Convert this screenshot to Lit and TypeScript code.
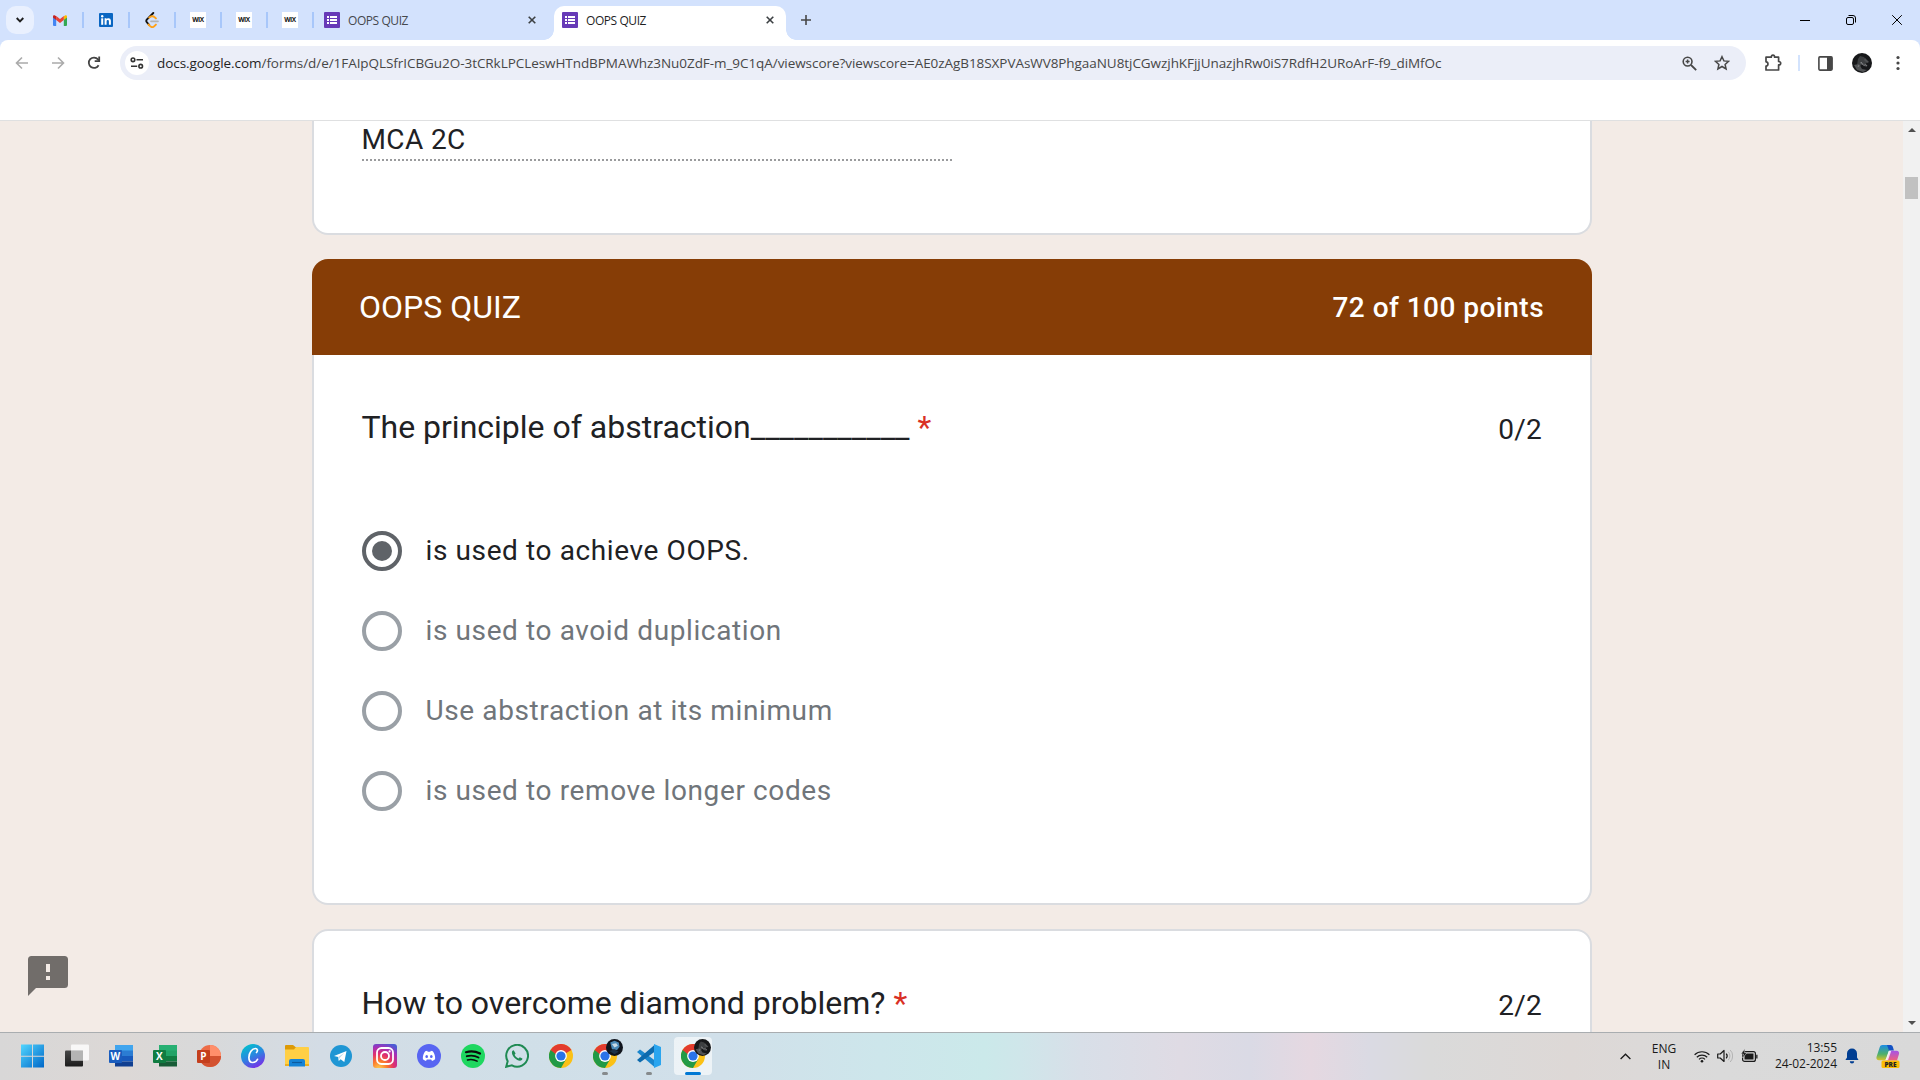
import { LitElement, html, css, svg, nothing } from "lit";
import { customElement } from "lit/decorators.js";
import { classMap } from "lit/directives/class-map.js";

const icon = (w: number, h: number, box: string, body: unknown) =>
  html`<svg class="ico" width=${w} height=${h} viewBox=${box} fill="none">${body}</svg>`;

const gmail = icon(14, 11, "0 0 14 11", svg`
  <path d="M0 1.600V10a1 1 0 0 0 1 1h2.200V4z" fill="#4285f4"/>
  <path d="M14 1.600V10a1 1 0 0 1-1 1h-2.200V4z" fill="#34a853"/>
  <path d="M10.800 1.200L12 .4c.9-.6 2 0 2 1.100V2.600L10.800 5z" fill="#fbbc04"/>
  <path d="M3.200 5V1l3.800 2.900L10.800 1v4L7 7.900z" fill="#ea4335"/>
  <path d="M0 2.600V1.500C0 .4 1.100-.2 2 .4L3.200 1.200V5z" fill="#c5221f"/>`);

const linkedin = icon(14, 14, "0 0 14 14", svg`
  <rect width="14" height="14" rx="1" fill="#0a66c2"/>
  <rect x="2.200" y="5.300" width="2" height="6.500" fill="#fff"/><circle cx="3.200" cy="3.200" r="1.200" fill="#fff"/>
  <path d="M5.600 5.300h1.900v.9c.9-1.600 4.400-1.500 4.400 1.600v4H9.900V8.500c0-2-2.300-1.800-2.300 0v3.300h-2z" fill="#fff"/>`);

const leetcode = icon(14, 16, "0 0 14 16", svg`
  <path d="M8.300 1L2 7.400c-1 1-1 2 0 3L4.200 13" stroke="#111" stroke-width="1.900" stroke-linecap="round"/>
  <path d="M4.200 5.600c1.500-1.500 4-1.900 5.500-.3l1.200 1.100M3.500 12.500l1.600 1.600c1.300 1.200 3.200 1.100 4.300 0l1.500-1.500" stroke="#ffa116" stroke-width="1.900" stroke-linecap="round"/>
  <path d="M6 9.300h7" stroke="#b3b3b3" stroke-width="1.700" stroke-linecap="round"/>`);

const forms = icon(16, 16, "0 0 16 16", svg`
  <rect width="16" height="16" rx="1" fill="#673ab7"/>
  <path d="M3 4h2v2H3zM3 7h2v2H3zM3 10h2v2H3zM6 4h7v2H6zM6 7h7v2H6zM6 10h7v2H6z" fill="#fff"/>`);

const close = icon(8, 8, "0 0 8 8", svg`<path d="M.7.7l6.600 6.600M7.300.7L.7 7.300" stroke="#3c4043" stroke-width="1.600"/>`);
const plus = icon(10, 10, "0 0 10 10", svg`<path d="M5 0v10M0 5h10" stroke="#474747" stroke-width="1.600"/>`);
const chevron = icon(8, 6, "0 0 8 6", svg`<path d="M.7 1L4 4.300 7.300 1" stroke="#1f1f1f" stroke-width="1.900"/>`);

const back = icon(14, 14, "0 0 14 14", svg`<path d="M13 7H2M7 1.500L1.500 7 7 12.500" stroke="#ababab" stroke-width="1.600"/>`);
const forward = icon(14, 14, "0 0 14 14", svg`<path d="M1 7h11M7 1.500L12.500 7 7 12.500" stroke="#ababab" stroke-width="1.600"/>`);
const reload = icon(14, 14, "0 0 14 14", svg`<path d="M11.600 9.200A5.200 5.200 0 1 1 11 3.400l1 1.100" stroke="#444" stroke-width="1.800"/><path d="M12.200.6v4.500H7.700" stroke="#444" stroke-width="1.800"/>`);
const tune = icon(14, 12, "0 0 14 12", svg`
  <g stroke="#333" stroke-width="1.600"><circle cx="3" cy="2.800" r="1.800"/><path d="M6.500 2.800H13M1 9.200h6.200"/><circle cx="10.700" cy="9.200" r="1.800"/></g>`);
const zoomIn = icon(15, 15, "0 0 15 15", svg`
  <circle cx="5.600" cy="5.600" r="4.400" stroke="#474747" stroke-width="1.600"/><path d="M9 9l5.200 5.200" stroke="#474747" stroke-width="1.800"/><path d="M5.600 3.600v4M3.600 5.600h4" stroke="#474747" stroke-width="1.500"/>`);
const star = icon(16, 16, "0 0 16 16", svg`<path d="M8 1.700l1.900 4.200 4.700.4-3.500 3.100 1 4.600L8 11.500 3.900 14l1-4.600L1.400 6.300l4.700-.4z" stroke="#474747" stroke-width="1.500"/>`);
const puzzle = icon(18, 18, "0 0 18 18", svg`
  <path d="M2 3.200h5.300C7.300.4 10.600.4 10.600 3.200H14.600v4.300c2.800 0 2.800 3.400 0 3.400V16H2v-4c2.600-.2 2.600-4 0-4.200z" stroke="#474747" stroke-width="1.700" stroke-linejoin="round"/>`);
const panel = icon(15, 15, "0 0 15 15", svg`<rect x=".9" y=".9" width="13.200" height="13.200" rx="1" stroke="#474747" stroke-width="1.600"/><path d="M9 1h5v13H9z" fill="#474747"/>`);
const dots = icon(4, 16, "0 0 4 16", svg`<g fill="#474747"><circle cx="2" cy="2.500" r="1.600"/><circle cx="2" cy="8" r="1.600"/><circle cx="2" cy="13.500" r="1.600"/></g>`);
const portrait = (size: number) => icon(size, size, "0 0 20 20", svg`
  <circle cx="10" cy="10" r="10" fill="#17181a"/>
  <path d="M6 6l2-3 4 1 3 4-1 3-4-1-2 4-3-2z" fill="#3d3f41"/>
  <path d="M2 12l5-1 3 5 5 1-4 2-6-2zM13 5l4 4-2 1-3-3z" fill="#505254"/>
  <path d="M9 9l2 2 3 .5 1 1.500-3-.5-3-2zM6 14l1-2" stroke="#8f9193" stroke-width=".7"/>`);
const winMin = icon(10, 1, "0 0 10 1", svg`<path d="M0 0h10v1H0z" fill="#000"/>`);
const winMax = icon(10, 10, "0 0 10 10", svg`<rect x=".5" y="2.500" width="7" height="7" rx="1.500" stroke="#000"/><path d="M2.500.5H7A2.500 2.500 0 0 1 9.500 3v4.500" stroke="#000"/>`);
const winClose = icon(10, 10, "0 0 10 10", svg`<path d="M.2.2l9.600 9.600M9.800.2L.2 9.800" stroke="#000"/>`);

const office = (letter: string, dark: string, c: string[], round = false) => icon(24, 24, "0 0 24 24", svg`
  ${round
    ? svg`<circle cx="13" cy="12" r="11" fill=${c[0]}/><path d="M13 1a11 11 0 0 1 11 11H13z" fill=${c[1]}/><path d="M2 12h22a11 11 0 0 1-22 0z" fill=${c[2]}/>`
    : svg`<path d="M6 1h18v6H6z" fill=${c[0]}/><path d="M6 6.500h18V12H6z" fill=${c[1]}/><path d="M6 12h18v5.500H6z" fill=${c[2]}/><path d="M6 17.500h18V22.500H6z" fill=${c[3]}/>`}
  <rect x="0" y="6" width="13" height="13" rx="1" fill=${dark}/>
  <text x="6.300" y="16" text-anchor="middle" font-family="Open Sans, sans-serif" font-weight="700" font-size="10" fill="#fff">${letter}</text>`);

const chrome = () => icon(24, 24, "0 0 24 24", svg`
  <circle cx="12" cy="12" r="12" fill="#fbc116"/>
  <path d="M12 12L1.600 6A12 12 0 0 1 22.400 6z" fill="#e33b2e"/>
  <path d="M1.600 6A12 12 0 0 0 12 24l5.200-9L12 12z" fill="#229a46"/>
  <path d="M1.600 6L12 6v6l-3 1z" fill="#e33b2e"/><path d="M1.600 6l5.200 9 3-2z" fill="#229a46"/>
  <circle cx="12" cy="12" r="5.900" fill="#fff"/><circle cx="12" cy="12" r="4.600" fill="#2a73e8"/>`);

const windows = icon(24, 24, "0 0 24 24", svg`
  <defs><linearGradient id="w" x1="0" y1="0" x2="1" y2="1"><stop stop-color="#52d6ff"/><stop offset="1" stop-color="#0067c8"/></linearGradient></defs>
  <path d="M0 .5h11v11.300H0zM12 .5H23v11.300H12zM0 12.700h11v10.800H0zM12 12.700H23v10.800H12z" fill="url(#w)"/>`);
const taskView = icon(24, 24, "0 0 24 24", svg`
  <defs><linearGradient id="tv" x1="0" y1="0" x2="0" y2="1"><stop stop-color="#484848"/><stop offset="1" stop-color="#1c1c1c"/></linearGradient></defs>
  <rect x="0" y="6.500" width="18" height="16" rx="1" fill="url(#tv)"/><rect x="6" y=".5" width="18" height="16" rx="1" fill="#fff" fill-opacity=".8"/><path d="M6 6.500h12v10H6z" fill="#b4b4b4"/>`);
const canva = icon(24, 24, "0 0 24 24", svg`
  <defs><linearGradient id="cv" x1=".2" y1="0" x2=".7" y2="1"><stop stop-color="#00c4cc"/><stop offset=".5" stop-color="#2a86e0"/><stop offset="1" stop-color="#7d2ae8"/></linearGradient></defs>
  <circle cx="12" cy="12" r="12" fill="url(#cv)"/>
  <path d="M15.500 8.500c1.600-1.500 1-4-1-4-3.500 0-6.600 4.600-6.600 9 0 3 1.500 5 3.800 5 2 0 3.800-1.300 4.800-3.200" stroke="#fff" stroke-width="1.700" stroke-linecap="round"/>`);
const folder = icon(24, 24, "0 0 24 24", svg`
  <path d="M0 2a1 1 0 0 1 1-1h7l2.500 2H23v6H0z" fill="#dd9a06"/><path d="M0 5.500h9L11 3h12a1 1 0 0 1 1 1v18H0z" fill="#ffcf45"/>
  <path d="M4 22.500V17a2 2 0 0 1 2-2h12a2 2 0 0 1 2 2v5.500z" fill="#1583d6"/><path d="M7 18.500h10" stroke="#0c5a9e" stroke-width="1.200"/><path d="M0 20h4v2H0zM20 20h4v2h-4z" fill="#eeb01e"/>`);
const telegram = icon(22, 22, "0 0 22 22", svg`
  <circle cx="11" cy="11" r="11" fill="#1f96d4"/><path d="M4 11l12.500-5-2.200 11-3.700-2.700L8.800 16l-.6-4z" fill="#fff"/><path d="M8.200 12l6-4-4.600 5-.8 3z" fill="#b9d9ec"/>`);
const instagram = icon(24, 24, "0 0 24 24", svg`
  <defs><radialGradient id="ig" cx=".25" cy="1.050" r="1.150"><stop stop-color="#ffd354"/><stop offset=".3" stop-color="#fb7a2c"/><stop offset=".55" stop-color="#e1306c"/><stop offset=".8" stop-color="#a52fb8"/><stop offset="1" stop-color="#4c5bd4"/></radialGradient></defs>
  <rect width="24" height="24" rx="3" fill="url(#ig)"/><rect x="4" y="4" width="16" height="16" rx="4.500" stroke="#fff" stroke-width="1.800"/><circle cx="12" cy="12" r="4" stroke="#fff" stroke-width="1.800"/><circle cx="16.600" cy="7.400" r="1.100" fill="#fff"/>`);
const discord = icon(24, 24, "0 0 24 24", svg`
  <circle cx="12" cy="12" r="12" fill="#5865f2"/><path d="M8.200 7.300l2-.5.5.9h2.600l.5-.9 2 .5c1.700 2.300 2.600 5 2.300 8-.9.800-2 1.300-3.100 1.600l-.8-1.300H9.800L9 16.900c-1.100-.3-2.200-.8-3.100-1.600-.3-3 .6-5.700 2.300-8z" fill="#fff"/><ellipse cx="9.700" cy="12.500" rx="1.300" ry="1.500" fill="#5865f2"/><ellipse cx="14.300" cy="12.500" rx="1.300" ry="1.500" fill="#5865f2"/>`);
const spotify = icon(24, 24, "0 0 24 24", svg`
  <circle cx="12" cy="12" r="12" fill="#1ed760"/><g stroke="#0b0b0b" stroke-linecap="round"><path d="M5 8.200c4.700-1.400 9.700-.9 14 1.300" stroke-width="2.200"/><path d="M5.800 12.200c4-1.100 8-.7 11.700 1.300" stroke-width="1.900"/><path d="M6.500 15.900c3.400-.9 6.500-.5 9.600 1.200" stroke-width="1.600"/></g>`);
const whatsapp = icon(24, 24, "0 0 24 24", svg`
  <path d="M1.200 22.800l1.500-5.600A10.900 10.900 0 1 1 6.900 21.300z" stroke="#1f8a53" stroke-width="2"/><path d="M8.700 6.300c-.6-.1-1.800.8-1.800 2.200 0 3.600 4.700 8.200 8 8.200 1.600 0 2.700-1.200 2.500-2.200l-2.600-1.300-1.300 1.400c-1.800-.8-3.100-2-3.900-3.800l1-1.300z" fill="#1f8a53"/>`);
const vscode = icon(24, 24, "0 0 24 24", svg`
  <path d="M0 8l3-2.500L18 16.500v7z" fill="#1a86cd"/><path d="M0 16l3 2.500L18 7.500V.5z" fill="#0d6aad"/><path d="M17 0l7 3v18l-7 3z" fill="#2aa5ef"/>`);

const wifi = icon(16, 13, "0 0 16 13", svg`
  <g stroke="#1a1a1a" stroke-width="1.200"><path d="M.6 4.800a10.500 10.500 0 0 1 14.800 0M2.800 7.200a7.400 7.400 0 0 1 10.400 0M5 9.400a4.300 4.300 0 0 1 6 0"/></g><circle cx="8" cy="11.300" r="1.300" fill="#1a1a1a"/>`);
const volume = icon(16, 14, "0 0 16 14", svg`
  <path d="M.7 5h2.500L7 1.500v11L3.200 9H.7z" stroke="#1a1a1a" stroke-width="1.200" stroke-linejoin="round"/><path d="M9.200 4.700a3.500 3.500 0 0 1 0 4.600" stroke="#1a1a1a" stroke-width="1.200"/><path d="M11.200 2.800a6 6 0 0 1 0 8.400M13.200 1a8.500 8.500 0 0 1 0 12" stroke="#b3b3b3" stroke-width="1"/>`);
const battery = icon(17, 14, "0 0 17 14", svg`
  <rect x="1.600" y="2.600" width="12.800" height="9.800" rx="2" stroke="#1a1a1a" stroke-width="1.200"/><path d="M3.500 4.500h9v6h-9z" fill="#1a1a1a"/><path d="M15.200 5.800h1.300v3.600h-1.300z" fill="#1a1a1a"/><path d="M3.800-.2L0 5h2.400L1.600 9 6 3.800H3.600z" fill="#1a1a1a" stroke="#dadada" stroke-width=".5"/>`);
const bell = icon(14, 16, "0 0 14 16", svg`<path d="M7 .5a5 5 0 0 1 5 5v4l1.600 2.500H.4L2 9.500v-4a5 5 0 0 1 5-5zM4.800 13.300h4.400a2.200 2.200 0 0 1-4.400 0z" fill="#003e92"/>`);
const copilot = icon(24, 24, "0 0 24 24", svg`
  <defs><linearGradient id="p1" x1="0" y1="0" x2="0" y2="1"><stop stop-color="#1b8ce4"/><stop offset=".6" stop-color="#4fb06a"/><stop offset="1" stop-color="#d9c32b"/></linearGradient>
  <linearGradient id="p2" x1="0" y1="0" x2="0" y2="1"><stop stop-color="#a553e8"/><stop offset="1" stop-color="#f0607a"/></linearGradient></defs>
  <path d="M6.500 1H15l-4.500 13c-.5 1.500-1.500 2.300-3 2.300H3c-2 0-3-1.500-2.500-3.300L3.700 3.200C4.200 1.700 5 1 6.500 1z" fill="url(#p1)"/><path d="M11 1h3.500c1.300 0 2 .8 2.400 2l1 3.500H13z" fill="#1452c4"/>
  <path d="M14.500 6.800h6c2 0 3 1.300 2.500 3.200L21 16.500H10.500l2.500-7.700c.3-1.200.7-2 1.500-2z" fill="url(#p2)"/><path d="M12.700 7h2.500L12 16.300H9.500z" fill="#fff" opacity=".8"/>
  <rect x="5.500" y="16.500" width="18" height="7.500" rx="1.500" fill="#fbbc05"/><text x="14.500" y="22.700" text-anchor="middle" font-family="Open Sans, sans-serif" font-weight="800" font-size="6.500" fill="#222">PRE</text>`);

const feedback = icon(40, 40, "0 0 40 40", svg`<path d="M3.500 0h33A3.500 3.500 0 0 1 40 3.500v25a3.500 3.500 0 0 1-3.500 3.500H8l-8 8V3.500A3.500 3.500 0 0 1 3.500 0z" fill="#716d6a"/><path d="M18 8h4v8h-4zM18 20h4v4h-4z" fill="#f3ebe6"/>`);

const wix = html`<span class="wix">WIX</span>`;
const PINNED = [gmail, linkedin, leetcode, wix, wix, wix];

const OPTIONS = [
  { text: "is used to achieve OOPS.", checked: true },
  { text: "is used to avoid duplication", checked: false },
  { text: "Use abstraction at its minimum", checked: false },
  { text: "is used to remove longer codes", checked: false },
];

@customElement("browser-chrome")
class BrowserChrome extends LitElement {
  static styles = css`
    :host { display: block; font-family: "Open Sans", "Noto Sans", sans-serif; }
    .ico { display: block; flex: none; }
    .strip { display: flex; height: 40px; background: #d3e2fd; align-items: flex-start; }
    .search { width: 28px; height: 28px; margin: 6px 3px 0 6px; border-radius: 10px; background: #e9f0fe; display: grid; place-items: center; }
    .pin { width: 46px; height: 40px; display: grid; place-items: center; box-sizing: border-box; padding-right: 2px; background: linear-gradient(#a8c7fa, #a8c7fa) right center / 2px 16px no-repeat; }
    .pins { display: flex; margin-left: 1px; }
    .wix { width: 16px; height: 16px; background: #fff; color: #111; font: 700 6.5px/16px "Open Sans", sans-serif; text-align: center; letter-spacing: -0.4px; }
    .tab { display: flex; align-items: center; height: 34px; padding-bottom: 6px; box-sizing: border-box; margin-top: 6px; font-size: 12px; color: #45484d; letter-spacing: -0.43px; }
    .tab .name { margin-left: 8px; flex: 1; line-height: 16px; padding-top: 2px; }
    .t1 { width: 240px; padding-left: 10px; padding-right: 18px; }
    .t2 { width: 232px; background: #fff; border-radius: 10px 10px 0 0; padding-left: 8px; padding-right: 12px; position: relative; color: #1f1f1f; }
    .t2::before, .t2::after { content: ""; position: absolute; bottom: 0; width: 10px; height: 10px; }
    .t2::before { left: -10px; background: radial-gradient(circle at 0 0, transparent 9.5px, #fff 10px); }
    .t2::after { right: -10px; background: radial-gradient(circle at 100% 0, transparent 9.5px, #fff 10px); }
    .plus { padding: 15px 0 0 15px; }
    .win { margin-left: auto; display: flex; height: 40px; }
    .win span { width: 46px; display: grid; place-items: center; }
    .bar { display: flex; height: 80px; background: #fff; border-radius: 8px 8px 0 0; align-items: flex-start; padding-top: 6px; box-sizing: border-box; }
    .back { background: #d3e2fd; border-bottom: 1px solid #dfe0e1; }
    .nav { display: flex; height: 34px; align-items: center; padding-left: 4px; width: 116px; }
    .nav span { width: 36px; display: grid; place-items: center; }
    .omni { display: flex; align-items: center; width: 1626px; height: 34px; border-radius: 17px; background: #ebeef8; box-sizing: border-box; padding: 0 16px 0 5px; }
    .info { width: 24px; height: 24px; border-radius: 50%; background: #fff; display: grid; place-items: center; margin-right: 8px; }
    .url { flex: 1; font-size: 13.5px; line-height: 20px; color: #474747; white-space: nowrap; letter-spacing: -0.058px; }
    .url b { font-weight: 400; color: #1f1f1f; }
    .omni .star { margin-left: 17px; }
    .right { display: flex; align-items: center; height: 34px; flex: 1; }
    .puz { margin-left: 18px; }
    .sep { width: 2px; height: 16px; background: #d3e3fd; margin: 0 18px 0 16px; }
    .ava { margin: 0 24px 0 19px; }
  `;
  render() {
    return html`
      <div class="strip">
        <div class="search">${chevron}</div>
        <div class="pins">${PINNED.map((p) => html`<div class="pin">${p}</div>`)}</div>
        <div class="tab t1">${forms}<span class="name">OOPS QUIZ</span>${close}</div>
        <div class="tab t2">${forms}<span class="name">OOPS QUIZ</span>${close}</div>
        <div class="plus">${plus}</div>
        <div class="win"><span>${winMin}</span><span>${winMax}</span><span>${winClose}</span></div>
      </div>
      <div class="back"><div class="bar">
        <div class="nav"><span>${back}</span><span>${forward}</span><span>${reload}</span></div>
        <div class="omni">
          <span class="info">${tune}</span>
          <span class="url"><b>docs.google.com</b>/forms/d/e/1FAIpQLSfrICBGu2O-3tCRkLPCLeswHTndBPMAWhz3Nu0ZdF-m_9C1qA/viewscore?viewscore=AE0zAgB18SXPVAsWV8PhgaaNU8tjCGwzjhKFjjUnazjhRw0iS7RdfH2URoArF-f9_diMfOc</span>
          ${zoomIn}<span class="star">${star}</span>
        </div>
        <div class="right"><span class="puz">${puzzle}</span><span class="sep"></span>${panel}<span class="ava">${portrait(20)}</span>${dots}</div>
      </div></div>`;
  }
}

@customElement("quiz-page")
class QuizPage extends LitElement {
  static styles = css`
    :host { display: flex; height: 911px; overflow: hidden; background: #f3ebe6; font-family: Roboto, sans-serif; color: #202124; position: relative; }
    .ico { display: block; }
    .col { width: 1280px; margin-left: 312px; display: flex; flex-direction: column; gap: 24px; flex: none; }
    .card { background: #fff; border: 2px solid #dadce0; border-radius: 16px; box-sizing: border-box; flex: none; }
    .first { height: 114px; border-top: 0; border-radius: 0 0 16px 16px; padding: 0 48px; }
    .answer { width: 590px; height: 40px; box-sizing: border-box; border-bottom: 2px dotted #9a9b9d; font-size: 28px; line-height: 38px; letter-spacing: 0.4px; text-indent: -0.5px; }
    .quiz { height: 646px; border: 0; background: none; display: flex; flex-direction: column; }
    .head { height: 96px; background: #863d06; color: #fff; border-radius: 16px 16px 0 0; display: flex; align-items: center; justify-content: space-between; padding: 0 48px 0 47px; box-sizing: border-box; }
    .title { font-size: 32px; line-height: 40px; }
    .score { font-size: 28px; line-height: 40px; font-weight: 500; letter-spacing: 0.45px; padding-top: 2px; }
    .body { flex: 1; background: #fff; border: 2px solid #dadce0; border-top: 0; border-radius: 0 0 16px 16px; padding: 48px 48px 0; }
    .q { display: flex; justify-content: space-between; height: 51px; font-size: 32px; line-height: 48px; text-indent: -0.6px; }
    .q i { font-style: normal; color: #d93025; margin-left: 8px; }
    .pts { font-size: 28px; letter-spacing: 0.2px; padding-top: 3px; line-height: 48px; }
    .opts { display: flex; flex-direction: column; gap: 40px; margin-top: 77px; }
    .opt { display: flex; align-items: center; height: 40px; font-size: 28px; letter-spacing: 0.61px; color: #70757a; line-height: 38px; }
    .opt.on { color: #202124; }
    .ring { width: 40px; height: 40px; border: 4px solid #9aa0a6; border-radius: 50%; box-sizing: border-box; margin-right: 23.5px; display: grid; place-items: center; }
    .label { padding-bottom: 1px; }
    .on .ring { border-color: #5f6368; }
    .dot { width: 20px; height: 20px; border-radius: 50%; background: #5f6368; }
    .next { height: 300px; padding: 48px 48px 0; }
    .fb { position: absolute; left: 28px; top: 835px; }
    .scroll { margin-left: auto; width: 17px; background: #f1f1f1; display: flex; flex-direction: column; align-items: center; box-sizing: border-box; padding: 7px 0; }
    .up, .down { width: 0; height: 0; border: 4px solid transparent; border-top: 0; border-bottom: 4px solid #505050; }
    .down { border-top: 4px solid #505050; border-bottom: 0; margin-top: auto; }
    .thumb { width: 13px; height: 22px; margin-top: 45px; background: #c1c1c1; }
  `;
  render() {
    return html`
      <div class="col">
        <div class="card first"><div class="answer">MCA 2C</div></div>
        <div class="card quiz">
          <div class="head"><span class="title">OOPS QUIZ</span><span class="score">72 of 100 points</span></div>
          <div class="body">
            <div class="q"><span>The principle of abstraction___________<i>*</i></span><span class="pts">0/2</span></div>
            <div class="opts">${OPTIONS.map((o) => html`
              <div class=${classMap({ opt: true, on: o.checked })}><span class="ring">${o.checked ? html`<b class="dot"></b>` : nothing}</span><span class="label">${o.text}</span></div>`)}
            </div>
          </div>
        </div>
        <div class="card next"><div class="q"><span>How to overcome diamond problem?<i>*</i></span><span class="pts">2/2</span></div></div>
      </div>
      <div class="fb">${feedback}</div>
      <div class="scroll"><span class="up"></span><span class="thumb"></span><span class="down"></span></div>`;
  }
}

@customElement("task-bar")
class TaskBar extends LitElement {
  static styles = css`
    :host { display: flex; height: 48px; box-sizing: border-box; border-top: 1px solid #a9adb0; font-family: "Open Sans", sans-serif; color: #1a1a1a;
      background: linear-gradient(90deg, #d8d7d7 0, #dcd8d6 125px, #d8d9da 210px, #d3dce5 320px, #d0dfe8 520px, #d1e0ea 720px, #cde6eb 880px, #cbe9ea 985px, #cfe6ea 1020px, #d8dfe8 1080px, #dfdbe4 1180px, #dadae5 1250px, #e5d8e1 1310px, #dadae3 1370px, #dadada 1430px, #ddd8d6 1570px, #dcd9d8 1640px, #dadada 1720px, #d9d9d9 100%); }
    .ico { display: block; }
    .apps { display: flex; padding-left: 11px; }
    .app { width: 44px; height: 46px; display: grid; place-items: center; position: relative; }
    .tile { width: 38px; height: 38px; display: grid; place-items: center; border-radius: 4px; }
    .active .tile { background: rgba(255, 255, 255, 0.6); }
    .badge { position: absolute; left: 23px; top: 6px; }
    .run { position: absolute; bottom: 4px; left: 19px; width: 6px; height: 3px; border-radius: 2px; background: #868a8c; }
    .active .run { left: 14px; width: 16px; background: #0078d4; }
    .tray { margin-left: auto; display: flex; align-items: center; height: 46px; font-size: 12px; line-height: 16px; letter-spacing: -0.05px; }
    .lang { text-align: center; width: 26px; margin: 0 17px 0 20px; padding-top: 1px; }
    .vol { margin: 0 8px 0 7px; }
    .time { text-align: right; margin-left: 9px; margin-right: 8px; width: 70px; white-space: nowrap; }
    .cop { margin: 0 20px 0 17px; }
  `;
  render() {
    const blue = icon(17, 17, "0 0 20 20", svg`<circle cx="10" cy="10" r="10" fill="#10151d"/><path d="M5 4l5-2 5 2 1 5-3 4-6-1z" fill="#4b8ab8"/><path d="M7 6l5-1 2 3-4 2z" fill="#c9dbe6"/><path d="M4 14l6-2 5 3-5 3z" fill="#1d3247"/>`);
    const apps = [
      { i: windows }, { i: taskView },
      { i: office("W", "#1a5dbe", ["#41a5ee", "#2b7cd3", "#185abd", "#103f91"]) },
      { i: office("X", "#107c41", ["#28b073", "#21a366", "#107c41", "#185c37"]) },
      { i: office("P", "#c43e1c", ["#ed6c47", "#ff8f6b", "#d35230"], true) },
      { i: canva }, { i: folder }, { i: telegram }, { i: instagram }, { i: discord }, { i: spotify }, { i: whatsapp }, { i: chrome() },
      { i: chrome(), run: true, badge: blue }, { i: vscode, run: true }, { i: chrome(), run: true, active: true, badge: portrait(17) },
    ] as { i: unknown; run?: boolean; active?: boolean; badge?: unknown }[];
    return html`
      <div class="apps">${apps.map((a) => html`
        <div class=${classMap({ app: true, active: !!a.active })}>
          <span class="tile">${a.i}</span>
          ${a.badge ? html`<span class="badge">${a.badge}</span>` : nothing}
          ${a.run ? html`<span class="run"></span>` : nothing}
        </div>`)}
      </div>
      <div class="tray">
        ${icon(11, 7, "0 0 11 7", svg`<path d="M.6 6L5.500 1.200 10.400 6" stroke="#1a1a1a" stroke-width="1.300"/>`)}
        <div class="lang">ENG<br>IN</div>
        ${wifi}<span class="vol">${volume}</span>${battery}
        <div class="time">13:55<br>24-02-2024</div>
        ${bell}<span class="cop">${copilot}</span>
      </div>`;
  }
}

@customElement("app-root")
class AppRoot extends LitElement {
  static styles = css`
    :host { display: block; width: 1920px; height: 1080px; overflow: hidden; }
  `;
  render() {
    return html`<browser-chrome></browser-chrome><quiz-page></quiz-page><task-bar></task-bar>`;
  }
}
